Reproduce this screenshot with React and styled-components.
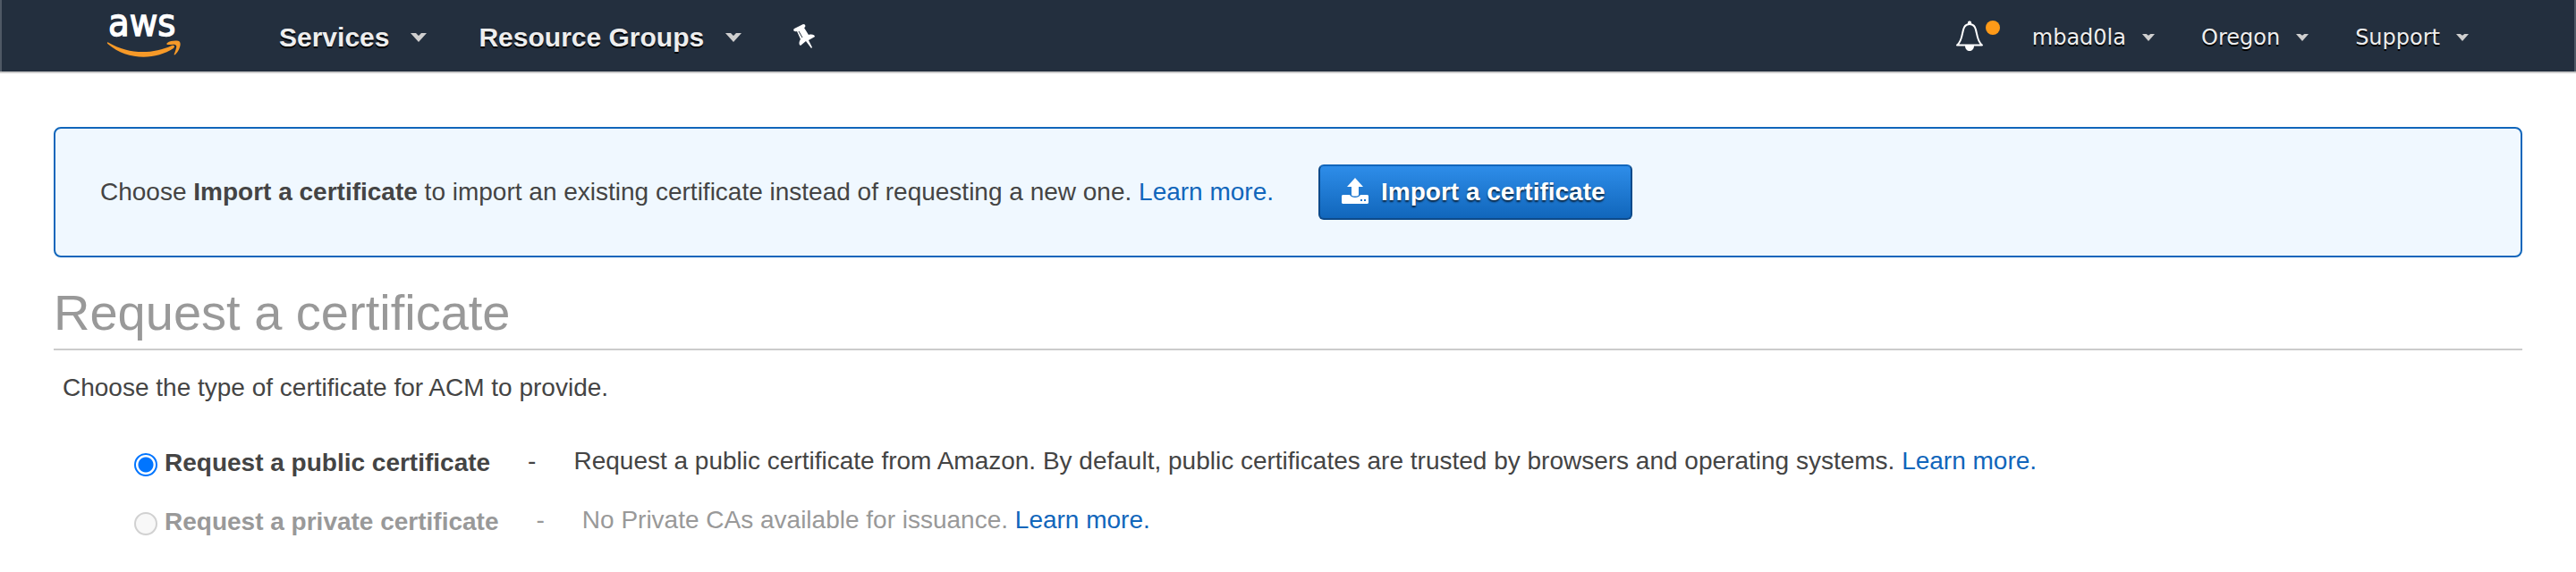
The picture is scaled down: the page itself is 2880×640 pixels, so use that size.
import React, { useState } from "react";
import styled, { createGlobalStyle } from "styled-components";

const GlobalStyle = createGlobalStyle`
  body {
    margin: 0;
    background: #ffffff;
    color: #444444;
    font-family: "Liberation Sans", Arial, sans-serif;
    font-size: 28px;
    line-height: 40px;
  }
`;

const NavBar = styled.header`
  display: flex;
  align-items: center;
  justify-content: space-between;
  height: 80px;
  padding: 0 118px 0 116px;
  background: #232f3e;
  border: 2px solid #4f5965;
  border-width: 0 2px;
  box-shadow: 0 2px 0 #cccccc;
`;

const NavGroup = styled.nav`
  display: flex;
  align-items: center;
  gap: ${(props) => props.$gap};
`;

const LogoLink = styled.a`
  display: flex;
  margin-right: 52px;
`;

const NavButton = styled.button`
  display: flex;
  align-items: center;
  gap: ${(props) => (props.$small ? "18px" : "24px")};
  padding: 4px 0 0;
  border: none;
  background: none;
  color: #eeeeee;
  font-family: ${(props) => (props.$small ? '"DejaVu Sans", Verdana, sans-serif' : "inherit")};
  font-size: ${(props) => (props.$small ? "24px" : "30px")};
  font-weight: ${(props) => (props.$small ? "normal" : "bold")};
  line-height: 40px;
  text-shadow: 0 2px 0 #000000;
  cursor: pointer;
`;

const IconButton = styled.button`
  display: flex;
  padding: 2px 0 0;
  border: none;
  background: none;
  cursor: pointer;
`;

const Page = styled.main`
  padding: 62px 60px 0;
`;

const ImportBanner = styled.section`
  display: flex;
  align-items: center;
  gap: 50px;
  padding: 40px 50px;
  border: 2px solid #1166bb;
  border-radius: 8px;
  background: #f0f8ff;
`;

const Text = styled.p`
  margin: 0;
`;

const Link = styled.a`
  color: #1166bb;
  text-decoration: none;
`;

const ImportButton = styled.button`
  display: flex;
  align-items: center;
  gap: 14px;
  height: 62px;
  padding: 0 28px 0 24px;
  border: 2px solid #0d4a8a;
  border-top-color: #1166bb;
  border-radius: 6px;
  background: linear-gradient(#2e8de9, #1166bb);
  color: #ffffff;
  font-family: inherit;
  font-size: 28px;
  font-weight: bold;
  text-shadow: 0 2px 2px rgba(0, 0, 0, 0.7);
  cursor: pointer;
`;

const PageTitle = styled.h1`
  margin: 30px 0 22px;
  padding-bottom: 8px;
  border-bottom: 2px solid #cccccc;
  color: #999999;
  font-size: 56px;
  font-weight: normal;
  line-height: 64px;
`;

const Options = styled.fieldset`
  display: flex;
  flex-direction: column;
  gap: 24px;
  margin: 0;
  padding: 0;
  border: none;
`;

const Legend = styled.legend`
  margin-bottom: 42px;
  padding: 0 10px;
`;

const OptionRow = styled.div`
  display: flex;
  align-items: flex-start;
  padding-left: 90px;
  color: ${(props) => (props.$disabled ? "#999999" : "inherit")};
`;

const OptionLabel = styled.label`
  display: flex;
  align-items: center;
  gap: 8px;
  padding-top: 2px;
  font-weight: bold;
`;

const Radio = styled.input`
  appearance: none;
  width: 26px;
  height: 26px;
  margin: 4px 0 0;
  border: 2px solid #d1d1d1;
  border-radius: 50%;
  background: #f8f8f8;

  &:checked {
    border-color: #0075ff;
    background: radial-gradient(circle, #0075ff 8px, #ffffff 9px);
  }
`;

const Dash = styled.span`
  margin: 0 42px;
`;

function AwsLogo() {
  return (
    <svg width="84" height="80" viewBox="0 0 84 80" role="img" aria-label="aws">
      <text x="3" y="40" fill="#ffffff" stroke="#ffffff" strokeWidth="1.300" fontFamily="DejaVu Sans Condensed, DejaVu Sans, sans-serif" fontSize="43">aws</text>
      <path fill="#f79a28" d="M3 47.500C26 61 52 61 74 51c3-1 4 1 2 3C55 68 23 67 3 49.500c-2-1-1-3 0-2z" />
      <path fill="#f79a28" d="M69 48c4-3 13-3 14-1 2 3-1 10-5 14-1 1-2 0-1-1 1-3 3-8 2-9-1-2-5-1-9-1-2 0-2-1-1-2z" />
    </svg>
  );
}

function Caret({ small }) {
  return (
    <svg width={small ? 14 : 18} height={small ? 8 : 10} viewBox="0 0 18 10">
      <path fill="#cfcfcf" d={small ? "M0 0h6l3 2 3-2h6L9 10z" : "M0 0h6l3 3 3-3h6L9 10z"} />
    </svg>
  );
}

function PinIcon() {
  return (
    <svg width="24" height="28" viewBox="0 0 24 28">
      <path fill="#ffffff" d="M1 5 11 0c3 0 3 3 1 4l5 8c4-1 7 0 7 2l-7 4 4 8-1 1-6-8-6 5c-2-1-2-4 0-7L4 8C1 9-1 7 1 5z" />
      <path fill="none" stroke="#232f3e" d="m6 8 4 7" />
    </svg>
  );
}

function BellIcon() {
  return (
    <svg width="52" height="36" viewBox="0 0 52 36">
      <path fill="none" stroke="#ffffff" strokeWidth="2" strokeLinejoin="round" d="M2 27.500C11 21 5 4 16 4s5 17 14 23.500z" />
      <path fill="#ffffff" d="M14 4V2c0-2 4-2 4 0v2zM11 28h10c0 8-10 8-10 0z" />
      <circle cx="42" cy="8" r="8" fill="#ff9a18" />
    </svg>
  );
}

function UploadIcon() {
  return (
    <svg width="30" height="32" viewBox="0 0 30 32">
      <path fill="#ffffff" d="M15 0 24 10h-5v9c0 2-8 2-8 0v-9H6z" />
      <path fill="#ffffff" d="M1 19h8c2 4 10 4 12 0h8l1 1v8l-1 1H1l-1-1v-8z" />
      <path fill="#1d74cc" d="M21 24h2v2h-2zM25 24h2v2h-2z" />
    </svg>
  );
}

const account = ["mbad0la", "Oregon", "Support"];

const options = [
  {
    id: "public",
    label: "Request a public certificate",
    description: "Request a public certificate from Amazon. By default, public certificates are trusted by browsers and operating systems.",
  },
  {
    id: "private",
    label: "Request a private certificate",
    description: "No Private CAs available for issuance.",
    disabled: true,
  },
];

export default function App() {
  const [selected, setSelected] = useState("public");

  return (
    <>
      <GlobalStyle />
      <NavBar>
        <NavGroup $gap="58px">
          <LogoLink href="#"><AwsLogo /></LogoLink>
          <NavButton>Services<Caret /></NavButton>
          <NavButton>Resource Groups<Caret /></NavButton>
          <IconButton aria-label="Pin shortcuts"><PinIcon /></IconButton>
        </NavGroup>
        <NavGroup $gap="34px">
          <IconButton aria-label="Notifications"><BellIcon /></IconButton>
          <NavGroup as="div" $gap="52px">
            {account.map((name) => (
              <NavButton $small key={name}>{name}<Caret small /></NavButton>
            ))}
          </NavGroup>
        </NavGroup>
      </NavBar>
      <Page>
        <ImportBanner>
          <Text>
            Choose <b>Import a certificate</b> to import an existing certificate instead of requesting a new one. <Link href="#">Learn more.</Link>
          </Text>
          <ImportButton><UploadIcon />Import a certificate</ImportButton>
        </ImportBanner>
        <PageTitle>Request a certificate</PageTitle>
        <Options>
          <Legend>Choose the type of certificate for ACM to provide.</Legend>
          {options.map((option) => (
            <OptionRow key={option.id} $disabled={option.disabled}>
              <OptionLabel htmlFor={option.id}>
                <Radio
                  type="radio"
                  name="certificate"
                  id={option.id}
                  checked={selected === option.id}
                  disabled={option.disabled}
                  onChange={() => setSelected(option.id)}
                />
                {option.label}
              </OptionLabel>
              <Dash>-</Dash>
              <Text>{option.description} <Link href="#">Learn more.</Link></Text>
            </OptionRow>
          ))}
        </Options>
      </Page>
    </>
  );
}
